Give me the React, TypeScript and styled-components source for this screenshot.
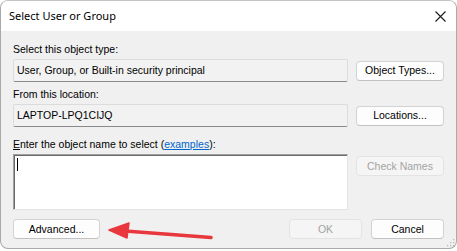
import React from 'react';
import styled, { createGlobalStyle } from 'styled-components';

const GlobalStyle = createGlobalStyle`
  html, body {
    margin: 0;
    padding: 0;
    background: #ffffff;
  }
  * {
    box-sizing: border-box;
  }
`;

const uiFont = `"Liberation Sans", Arial, sans-serif`;

const Window = styled.div`
  position: relative;
  width: 457px;
  height: 249px;
  border: 1px solid #a9a9a9;
  border-top-color: #c4c4c4;
  border-radius: 8px;
  overflow: hidden;
  background: #f0f0f0;
  display: flex;
  flex-direction: column;
`;

const TitleBar = styled.div`
  height: 30px;
  flex: none;
  background: #ffffff;
  display: flex;
  align-items: center;
  justify-content: space-between;
  padding: 0 10px 0 8px;
`;

const Title = styled.span`
  font-family: "Noto Sans", "Open Sans", sans-serif;
  font-size: 11px;
  color: #000;
  padding-bottom: 1px;
`;

const CloseIcon = styled.svg`
  width: 11px;
  height: 11px;
`;

const Body = styled.div`
  flex: 1;
  padding: 11px 12px 0 12px;
  display: grid;
  grid-template-columns: 335px 88px;
  column-gap: 8px;
  align-content: start;
`;

const Label = styled.div<{ $top?: number }>`
  grid-column: 1 / span 2;
  font-family: ${uiFont};
  font-size: 10.5px;
  line-height: 14px;
  height: 14px;
  color: #000;
  margin-top: ${p => p.$top ?? 0}px;
  margin-bottom: 3px;
`;

const Field = styled.div`
  height: 23px;
  background: #f2f2f2;
  border: 1px solid #dcdcdc;
  border-bottom-color: #8a8a8a;
  border-radius: 2px;
  font-family: ${uiFont};
  font-size: 10.5px;
  color: #000;
  display: flex;
  align-items: center;
  padding: 0 3px 1px;
`;

const ButtonCell = styled.div<{ $align?: string }>`
  display: flex;
  align-items: ${p => p.$align ?? 'center'};
  padding-top: ${p => (p.$align === 'flex-start' ? 2 : 0)}px;
`;

const Button = styled.button<{ $width?: number }>`
  width: ${p => (p.$width ? `${p.$width}px` : '100%')};
  height: 20px;
  margin: 0;
  padding: 0 0 1px;
  background: #fdfdfd;
  border: 1px solid #d3d3d3;
  border-bottom-color: #c2c2c2;
  border-radius: 4px;
  font-family: ${uiFont};
  font-size: 10.5px;
  color: #000;
  &:disabled {
    background: #f5f5f5;
    border-color: #e3e3e3;
    color: #a3a3a3;
  }
`;

const NameBox = styled.div`
  height: 56px;
  background: #ffffff;
  border: 1px solid;
  border-color: #9f9f9f #e3e3e3 #e3e3e3 #9f9f9f;
  box-shadow: inset 1px 1px 0 #6a6a6a;
  padding: 3px 0 0 3px;
`;

const Caret = styled.div`
  width: 1px;
  height: 13px;
  background: #000;
`;

const Link = styled.span`
  color: #0066cc;
  text-decoration: underline;
`;

const AccessKey = styled.span`
  text-decoration: underline;
`;

const Footer = styled.div`
  grid-column: 1 / span 2;
  margin-top: 9px;
  display: flex;
  align-items: center;
`;

const Spacer = styled.div`
  flex: 1;
`;

const FooterGap = styled.div`
  width: 9px;
`;

const Arrow = styled.svg`
  position: absolute;
  left: 100px;
  top: 218px;
  width: 116px;
  height: 26px;
`;

const Grip = styled.svg`
  position: absolute;
  right: 1px;
  bottom: 1px;
  width: 9px;
  height: 9px;
`;

export default function App() {
  return (
    <>
      <GlobalStyle />
      <Window>
        <TitleBar>
          <Title>Select User or Group</Title>
          <CloseIcon viewBox="0 0 11 11">
            <path d="M0.5 0.5 L10.5 10.5 M10.5 0.5 L0.5 10.5" stroke="#1a1a1a" strokeWidth="1.1" fill="none" />
          </CloseIcon>
        </TitleBar>
        <Body>
          <Label>Select this object type:</Label>
          <Field>User, Group, or Built-in security principal</Field>
          <ButtonCell>
            <Button>Object Types...</Button>
          </ButtonCell>

          <Label $top={5}>From this location:</Label>
          <Field>LAPTOP-LPQ1CIJQ</Field>
          <ButtonCell>
            <Button>Locations...</Button>
          </ButtonCell>

          <Label $top={10}>
            <AccessKey>E</AccessKey>nter the object name to select (<Link>examples</Link>):
          </Label>
          <NameBox>
            <Caret />
          </NameBox>
          <ButtonCell $align="flex-start">
            <Button disabled>Check Names</Button>
          </ButtonCell>

          <Footer>
            <Button $width={87}>Advanced...</Button>
            <Spacer />
            <Button $width={73} disabled>OK</Button>
            <FooterGap />
            <Button $width={73}>Cancel</Button>
          </Footer>
        </Body>
        <Arrow viewBox="0 0 116 26">
          <path d="M110 18.5 L24 12" stroke="#e8373d" strokeWidth="3.5" strokeLinecap="round" />
          <path d="M8 11 L28 4 L26 19 Z" fill="#e8373d" stroke="#e8373d" strokeWidth="1.5" strokeLinejoin="round" />
        </Arrow>
        <Grip viewBox="0 0 9 9">
          <g fill="#b5b5b5">
            <rect x="7" y="1" width="1.2" height="1.2" />
            <rect x="4" y="4" width="1.2" height="1.2" />
            <rect x="7" y="4" width="1.2" height="1.2" />
            <rect x="1" y="7" width="1.2" height="1.2" />
            <rect x="4" y="7" width="1.2" height="1.2" />
            <rect x="7" y="7" width="1.2" height="1.2" />
          </g>
        </Grip>
      </Window>
    </>
  );
}
